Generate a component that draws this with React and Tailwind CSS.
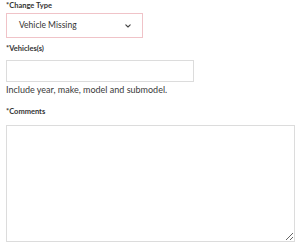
import React, { useState } from "react";

function ChevronDown() {
  return (
    <svg width="6" height="4" viewBox="0 0 6 4" fill="none">
      <path d="M0.8 0.8l2.2 2.2 2.2-2.2" stroke="#444" strokeWidth="1.1" strokeLinecap="round" strokeLinejoin="round" />
    </svg>
  );
}

export default function App() {
  const [vehicles, setVehicles] = useState("");
  const [comments, setComments] = useState("");

  return (
    <div className="w-[300px] h-[249px] bg-white px-[6px] pt-[1px] text-[#333]" style={{ fontFamily: "Lato, 'Open Sans', sans-serif" }}>
      <label className="block text-[7.5px] font-bold leading-[10px]">*Change Type</label>
      <button
        type="button"
        className="mt-[2px] flex items-center justify-between w-[137px] h-[25px] border border-[#f0c3c8] bg-white pl-[12px] pr-[11px] text-[8.5px]"
      >
        <span>Vehicle Missing</span>
        <ChevronDown />
      </button>

      <label className="block mt-[6px] text-[7.5px] font-bold leading-[10px]">*Vehicles(s)</label>
      <input
        value={vehicles}
        onChange={(e) => setVehicles(e.target.value)}
        className="block mt-[6px] w-[188px] h-[22px] border border-[#dcdcdc] outline-none px-2 text-[9px]"
      />
      <p className="mt-[2px] text-[9px] leading-[12px] text-[#3a3a3a]">Include year, make, model and submodel.</p>

      <label className="block mt-[11px] text-[7.5px] font-bold leading-[10px]">*Comments</label>
      <textarea
        value={comments}
        onChange={(e) => setComments(e.target.value)}
        className="block mt-[8px] w-[289px] h-[117px] border border-[#dcdcdc] outline-none p-2 text-[9px]"
      />
    </div>
  );
}
